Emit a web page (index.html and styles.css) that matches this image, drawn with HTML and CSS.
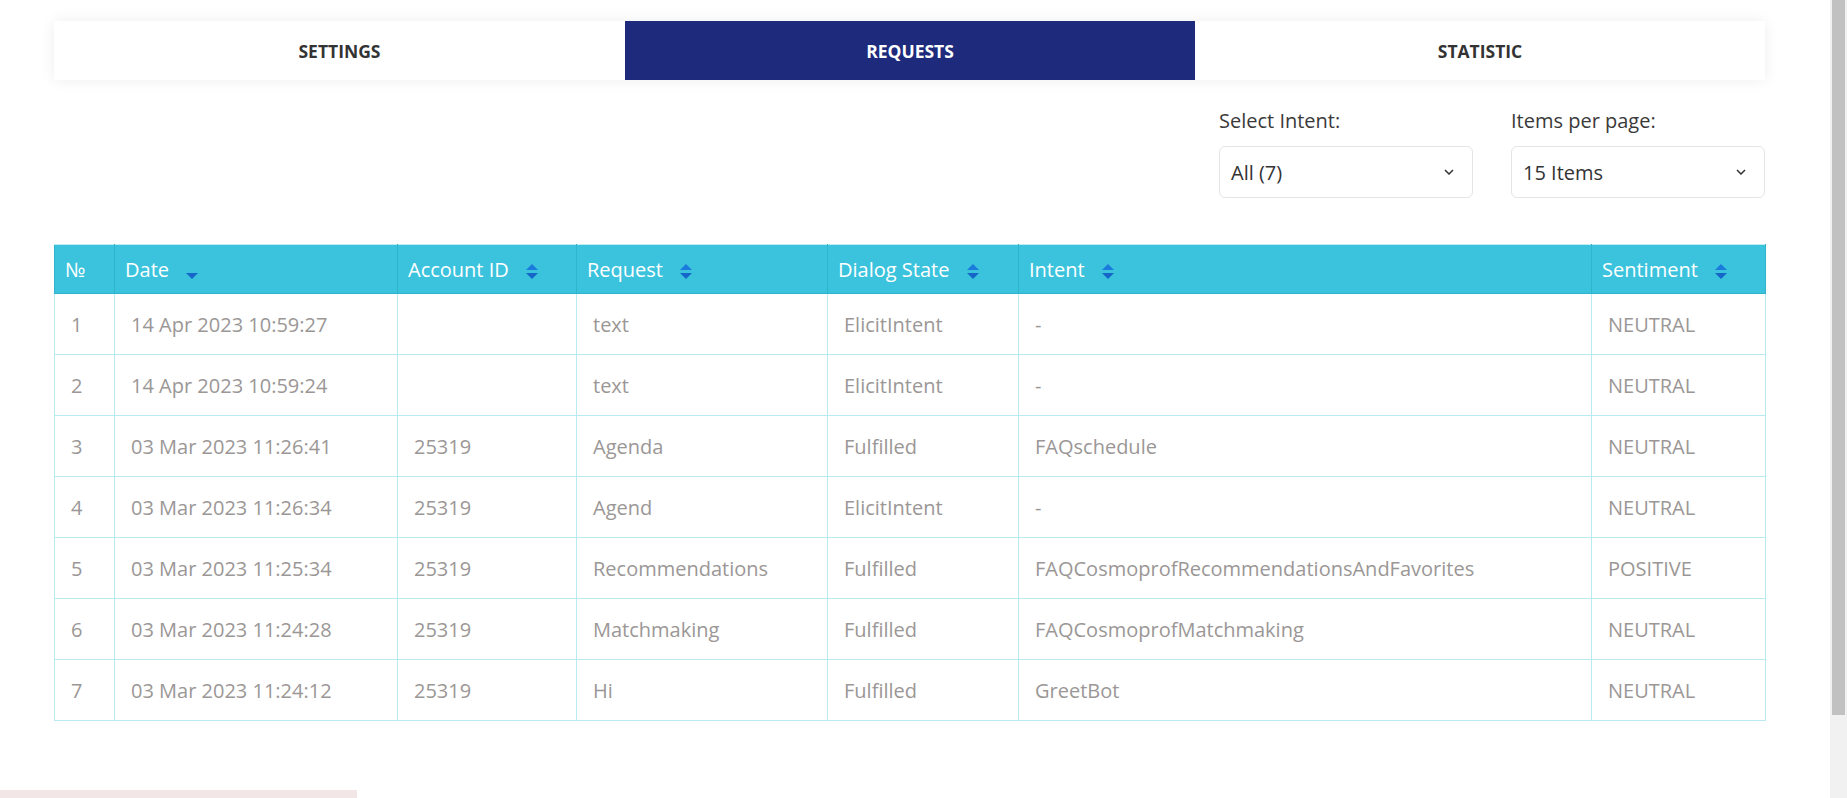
FILE: index.html
```html
<!DOCTYPE html>
<html lang="en">
<head>
    <meta charset="UTF-8">
    <meta name="viewport" content="width=device-width, initial-scale=1.0">
    <title>Requests</title>
    <link rel="stylesheet" href="styles.css">
</head>
<body>
<div class="page">
    <div class="main">
        <div class="content">
            <nav class="tabs">
                <a href="#" class="tab">Settings</a>
                <a href="#" class="tab active">Requests</a>
                <a href="#" class="tab">Statistic</a>
            </nav>

            <div class="filters">
                <div class="filter">
                    <label>Select Intent:</label>
                    <div class="select">
                        <span>All (7)</span>
                        <svg class="chevron" width="10" height="6" viewBox="0 0 10 6"><path d="M1 1l4 4 4-4" fill="none" stroke="#333" stroke-width="1.5"/></svg>
                    </div>
                </div>
                <div class="filter">
                    <label>Items per page:</label>
                    <div class="select">
                        <span>15 Items</span>
                        <svg class="chevron" width="10" height="6" viewBox="0 0 10 6"><path d="M1 1l4 4 4-4" fill="none" stroke="#333" stroke-width="1.5"/></svg>
                    </div>
                </div>
            </div>

            <table class="requests">
                <colgroup>
                    <col class="c-num">
                    <col class="c-date">
                    <col class="c-account">
                    <col class="c-request">
                    <col class="c-state">
                    <col class="c-intent">
                    <col class="c-sentiment">
                </colgroup>
                <thead>
                <tr>
                    <th>№</th>
                    <th>Date <span class="sort desc"><i class="down"></i></span></th>
                    <th>Account ID <span class="sort"><i class="up"></i><i class="down"></i></span></th>
                    <th>Request <span class="sort"><i class="up"></i><i class="down"></i></span></th>
                    <th>Dialog State <span class="sort"><i class="up"></i><i class="down"></i></span></th>
                    <th>Intent <span class="sort"><i class="up"></i><i class="down"></i></span></th>
                    <th>Sentiment <span class="sort"><i class="up"></i><i class="down"></i></span></th>
                </tr>
                </thead>
                <tbody>
                <tr><td>1</td><td>14 Apr 2023 10:59:27</td><td></td><td>text</td><td>ElicitIntent</td><td>-</td><td>NEUTRAL</td></tr>
                <tr><td>2</td><td>14 Apr 2023 10:59:24</td><td></td><td>text</td><td>ElicitIntent</td><td>-</td><td>NEUTRAL</td></tr>
                <tr><td>3</td><td>03 Mar 2023 11:26:41</td><td>25319</td><td>Agenda</td><td>Fulfilled</td><td>FAQschedule</td><td>NEUTRAL</td></tr>
                <tr><td>4</td><td>03 Mar 2023 11:26:34</td><td>25319</td><td>Agend</td><td>ElicitIntent</td><td>-</td><td>NEUTRAL</td></tr>
                <tr><td>5</td><td>03 Mar 2023 11:25:34</td><td>25319</td><td>Recommendations</td><td>Fulfilled</td><td>FAQCosmoprofRecommendationsAndFavorites</td><td>POSITIVE</td></tr>
                <tr><td>6</td><td>03 Mar 2023 11:24:28</td><td>25319</td><td>Matchmaking</td><td>Fulfilled</td><td>FAQCosmoprofMatchmaking</td><td>NEUTRAL</td></tr>
                <tr><td>7</td><td>03 Mar 2023 11:24:12</td><td>25319</td><td>Hi</td><td>Fulfilled</td><td>GreetBot</td><td>NEUTRAL</td></tr>
                </tbody>
            </table>
        </div>
        <div class="footer-strip"></div>
    </div>
    <div class="scrollbar"><div class="thumb"></div></div>
</div>
</body>
</html>
```

FILE: styles.css
```css
* {
    margin: 0;
    padding: 0;
    box-sizing: border-box;
    font-family: 'Open Sans', 'Liberation Sans', sans-serif;
}

body {
    background: #fff;
    overflow: hidden;
}

.page {
    display: flex;
    height: 798px;
}

.main {
    flex: 1;
    min-width: 0;
}

.content {
    padding: 21px 65px 0 54px;
}

/* tabs */
.tabs {
    display: grid;
    grid-template-columns: 571px 570px 1fr;
    height: 59px;
    background: #fff;
    box-shadow: 0 0 14px rgba(0, 0, 0, 0.07);
}

.tab {
    display: flex;
    align-items: center;
    justify-content: center;
    color: #333;
    font-size: 17.5px;
    font-weight: 700;
    text-transform: uppercase;
    text-decoration: none;
}

.tab.active {
    background: #1e2a7b;
    color: #fff;
}

/* filters */
.filters {
    display: flex;
    justify-content: flex-end;
    gap: 38px;
    margin-top: 27px;
}

.filter {
    display: flex;
    flex-direction: column;
    gap: 12px;
    width: 254px;
}

.filter label {
    font-size: 20px;
    line-height: 27px;
    color: #3a3a3a;
}

.select {
    display: flex;
    align-items: center;
    justify-content: space-between;
    height: 52px;
    padding: 0 18px 0 11px;
    border: 1px solid #e4e4e4;
    border-radius: 6px;
    font-size: 20px;
    color: #333;
}

/* table */
.requests {
    width: 100%;
    margin-top: 46px;
    border-collapse: collapse;
    table-layout: fixed;
}

.c-num { width: 60px; }
.c-date { width: 283px; }
.c-account { width: 179px; }
.c-request { width: 251px; }
.c-state { width: 191px; }
.c-intent { width: 573px; }
.c-sentiment { width: 174px; }

.requests th {
    height: 49px;
    padding: 0 9px 0 10px;
    background: #3bc3dd;
    color: #fff;
    font-size: 20px;
    font-weight: 400;
    text-align: left;
    white-space: nowrap;
    border: 1px solid #2fb4cc;
    border-top-color: #bfecf3;
}

.requests td {
    height: 61px;
    padding: 0 16px;
    color: #9b9796;
    font-size: 20px;
    white-space: nowrap;
    border: 1px solid #b9eaf2;
}

.sort {
    display: inline-flex;
    flex-direction: column;
    gap: 3px;
    margin-left: 12px;
    vertical-align: middle;
}

.sort i {
    display: block;
    width: 0;
    height: 0;
    border-left: 6px solid transparent;
    border-right: 6px solid transparent;
}

.sort .up {
    border-bottom: 6px solid #1a7bdc;
}

.sort .down {
    border-top: 6px solid #1566c8;
}

.sort.desc {
    padding-top: 9px;
}

/* bottom strip */
.footer-strip {
    width: 357px;
    height: 9px;
    margin-top: 69px;
    background: #f3e6e6;
}

/* page scrollbar */
.scrollbar {
    width: 17px;
    background: #f1f1f1;
    padding: 0 2px;
}

.scrollbar .thumb {
    height: 715px;
    background: #c1c1c1;
}
```
